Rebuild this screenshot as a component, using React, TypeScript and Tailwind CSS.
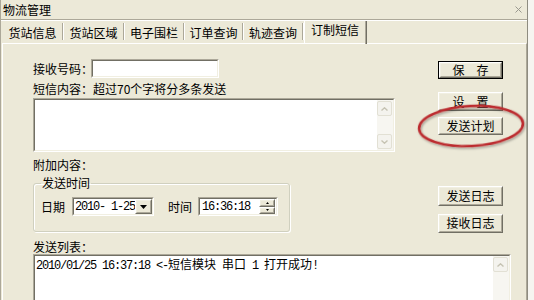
import React from 'react';

const tabs: [string, number][] = [
  ['货站信息', 61],
  ['货站区域', 61],
  ['电子围栏', 60],
  ['订单查询', 59],
  ['轨迹查询', 60],
];

// ASCII on a 6px pitch, CJK runs at 12px
const Mono = ({ text }: { text: string }) => (
  <span className="font-['Liberation_Mono',monospace] text-[12px] tracking-[-1.2px] whitespace-pre">
    {text.split(/([\u3000-\u9fff\uff00-\uffef]+)/).map((part, i) =>
      i % 2 ? (
        <span key={i} className="font-['Noto_Sans_CJK_SC',sans-serif] text-[12px] tracking-normal">
          {part}
        </span>
      ) : (
        part
      )
    )}
  </span>
);

const Sunken = ({ className = '', children }: { className?: string; children?: React.ReactNode }) => (
  <div className={`border border-t-[#ACA899] border-l-[#ACA899] border-b-white border-r-white ${className}`}>
    <div className="w-full h-full flex border border-t-[#716F64] border-l-[#716F64] border-b-[#F1EFE2] border-r-[#F1EFE2] bg-white">
      {children}
    </div>
  </div>
);

const Raised = ({ className = '', children }: { className?: string; children?: React.ReactNode }) => (
  <div className={`border border-t-white border-l-white border-b-[#716F64] border-r-[#716F64] bg-[#ECE9D8] ${className}`}>
    <div className="w-full h-full flex items-center justify-center border border-t-[#F1EFE2] border-l-[#F1EFE2] border-b-[#ACA899] border-r-[#ACA899]">
      {children}
    </div>
  </div>
);

const Btn = ({ label, def = false, className = '' }: { label: string; def?: boolean; className?: string }) =>
  def ? (
    <div className={`border border-black ${className}`}>
      <Raised className="h-full leading-[12px]">{label}</Raised>
    </div>
  ) : (
    <Raised className={`leading-[14px] ${className}`}>{label}</Raised>
  );

const ScrollBtn = ({ up }: { up?: boolean }) => (
  <div className="w-[15px] h-[15px] rounded-[2px] border border-[#E2E0D4] bg-[#F4F3EE] flex items-center justify-center">
    <svg width="7" height="4" viewBox="0 0 7 4">
      <path
        d={up ? 'M0.5 3.5L3.5 0.8L6.5 3.5' : 'M0.5 0.5L3.5 3.2L6.5 0.5'}
        stroke="#C6C3B3"
        strokeWidth="1.4"
        fill="none"
      />
    </svg>
  </div>
);

export default function App() {
  return (
    <div className="relative w-[534px] h-[300px] overflow-hidden flex bg-[#F6F5F0] font-['Noto_Sans_CJK_SC',sans-serif] text-[12px] leading-[14px] text-black">
      <div className="w-[528px] h-full flex flex-col bg-[#ECE9D8] border-l border-[#ACA899] border-r border-r-[#8E8C80]">
        {/* Title bar */}
        <div className="h-[19px] flex items-center justify-between pl-[2px] pr-[5px] shrink-0">
          <span>物流管理</span>
          <svg width="7" height="7" viewBox="0 0 7 7">
            <path d="M0.5 0.5L6.5 6.5M6.5 0.5L0.5 6.5" stroke="#9A998F" strokeWidth="1" />
          </svg>
        </div>
        <div className="h-[2px] shrink-0 border-t border-[#ACA899] border-b border-b-white" />

        {/* Tabs */}
        <div className="h-[22px] flex pl-[2px] shrink-0 relative z-10">
          {tabs.map(([t, w]) => (
            <div key={t} className="flex h-full" style={{ width: w }}>
              <div className="flex-1 flex justify-center pt-[5px]">{t}</div>
              <div className="mt-[2px] h-[17px] w-[2px] border-l border-[#ACA899] border-r border-r-white" />
            </div>
          ))}
          <div className="w-[63px] h-[23px] flex border-l border-white">
            <div className="flex-1 flex justify-center pt-[2px]">订制短信</div>
            <div className="h-full w-[2px] border-l border-[#ACA899] border-r border-r-[#716F64]" />
          </div>
        </div>

        {/* Panel */}
        <div className="flex-1 ml-[1px] border-t border-white border-l border-l-white border-r border-r-[#ACA899] pl-[30px]">
          <div className="h-[189px] pt-[15px] flex">
            <div className="w-[362px] flex flex-col">
              <div className="h-[19px] flex items-center">
                <span className="w-[58px] whitespace-nowrap">接收号码：</span>
                <Sunken className="w-[128px] h-[19px]" />
              </div>
              <div className="mt-[4px] h-[14px] whitespace-nowrap">短信内容：超过70个字将分多条发送</div>
              <Sunken className="mt-[2px] w-[362px] h-[54px]">
                <div className="flex-1" />
                <div className="w-[16px] flex flex-col justify-between bg-[#F7F6F1] py-[1px]">
                  <ScrollBtn up />
                  <ScrollBtn />
                </div>
              </Sunken>
              <div className="mt-[6px] h-[14px]">附加内容：</div>
              <fieldset className="mt-[4px] w-[257px] border border-[#D0D0BF] rounded-[3px] px-[7px] pb-[15px] shadow-[inset_1px_1px_0_#fff,1px_1px_0_#fff]">
                <legend className="px-[1px] leading-[14px]">发送时间</legend>
                <div className="mt-[7px] h-[19px] flex items-center">
                  <span className="w-[31px]">日期</span>
                  <Sunken className="w-[82px] h-[19px]">
                    <div className="flex-1 pl-[1px] flex items-center">
                      <Mono text="2010- 1-25" />
                    </div>
                    <Raised className="w-[17px] h-full">
                      <svg width="7" height="4" viewBox="0 0 7 4">
                        <path d="M0 0H7L3.5 4Z" fill="#000" />
                      </svg>
                    </Raised>
                  </Sunken>
                  <span className="ml-[14px] w-[30px]">时间</span>
                  <Sunken className="w-[80px] h-[19px]">
                    <div className="flex-1 pl-[2px] flex items-center">
                      <Mono text="16:36:18" />
                    </div>
                    <div className="w-[17px] flex flex-col justify-center pr-[1px]">
                      <Raised className="h-[8px]">
                        <svg width="3" height="2" viewBox="0 0 3 2">
                          <path d="M0 2H3L1.5 0Z" fill="#000" />
                        </svg>
                      </Raised>
                      <Raised className="h-[8px]">
                        <svg width="3" height="2" viewBox="0 0 3 2">
                          <path d="M0 0H3L1.5 2Z" fill="#000" />
                        </svg>
                      </Raised>
                    </div>
                  </Sunken>
                </div>
              </fieldset>
            </div>

            <div className="ml-[43px] w-[65px] flex flex-col">
              <Btn label="保　存" def className="mt-[2px] h-[19px]" />
              <Btn label="设　置" className="mt-[13px] h-[19px]" />
              <Btn label="发送计划" className="mt-[6px] h-[19px]" />
              <Btn label="发送日志" className="mt-[51px] h-[20px]" />
              <Btn label="接收日志" className="mt-[8px] h-[20px]" />
            </div>
          </div>

          <div className="mt-[7px] h-[14px]">发送列表：</div>
          <Sunken className="w-[478px] h-[50px]">
            <div className="flex-1 pl-[1px] pt-[1px] leading-[14px]">
              <Mono text="2010/01/25 16:37:18 <-短信模块 串口 1 打开成功!" />
            </div>
            <div className="w-[16px] flex flex-col bg-[#F7F6F1] py-[1px]">
              <ScrollBtn up />
            </div>
          </Sunken>
        </div>
      </div>

      {/* red highlight ring */}
      <svg className="absolute left-[412px] top-[99px] pointer-events-none" width="118" height="54" viewBox="0 0 118 54">
        <defs>
          <filter id="ringShadow" x="-10%" y="-25%" width="120%" height="150%">
            <feDropShadow dx="1" dy="1.5" stdDeviation="1" floodColor="#000" floodOpacity="0.35" />
          </filter>
        </defs>
        <ellipse
          cx="59"
          cy="27"
          rx="52"
          ry="20"
          transform="rotate(-3 59 27)"
          fill="none"
          stroke="#BC2A2E"
          strokeWidth="2.5"
          filter="url(#ringShadow)"
        />
      </svg>
    </div>
  );
}
